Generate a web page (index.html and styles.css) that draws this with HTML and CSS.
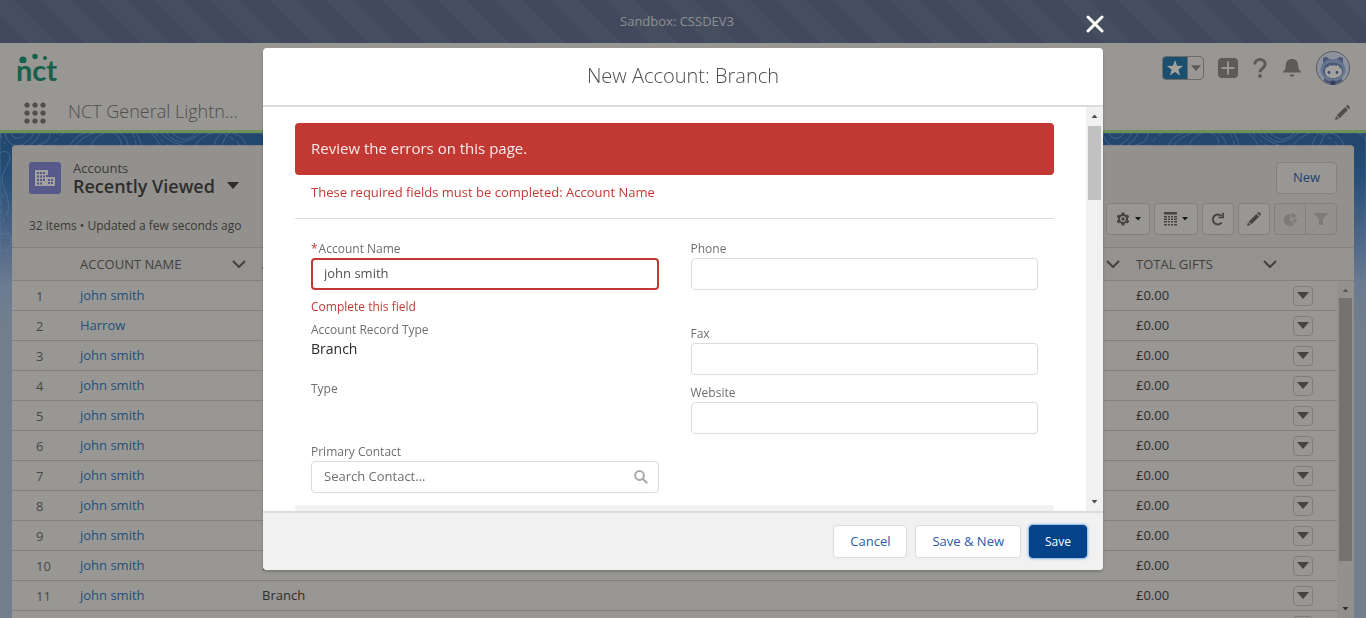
FILE: index.html
```
<!DOCTYPE html>
<html lang="en">
<head>
<meta charset="utf-8">
<meta name="viewport" content="width=device-width, initial-scale=1">
<title>New Account: Branch</title>
<link rel="stylesheet" href="styles.css">
</head>
<body>
<svg class="sprite" aria-hidden="true">
  <symbol id="caret" viewBox="0 0 12 8"><path d="M0 0h12L6 7z"/></symbol>
  <symbol id="chevron" viewBox="0 0 14 8"><path d="M1 1l6 6 6-6" fill="none" stroke="currentColor" stroke-width="2"/></symbol>
  <symbol id="pencil" viewBox="0 0 16 16"><path d="M11.6 1.3l1-1c.4-.4 1-.4 1.400 0l1.700 1.700c.4.4.4 1 0 1.400l-1 1zM10.700 2.200l3.100 3.100L5 14.100 1.900 11zM1.200 11.800l3 3-3.600 1c-.4.1-.6-.1-.5-.5z"/></symbol>
</svg>

<div class="page">
  <div class="banner">Sandbox: CSSDEV3</div>

  <header class="header">
    <div class="header-top">
      <div class="logo"><span class="logo-word">nct</span>
        <svg class="logo-dots" viewBox="0 0 40 10" width="40" height="10"><circle cx="7" cy="7" r="3.600"/><circle cx="19" cy="3.500" r="2.700"/><circle cx="29" cy="5" r="2"/></svg>
      </div>
      <div class="header-actions">
        <div class="favorites">
          <button class="fav-star" type="button" aria-label="Favorite"><svg width="18" height="18" viewBox="0 0 18 18"><path d="M9 1l2.100 5.700 6 .2-4.700 3.700 1.700 5.800L9 13l-5.100 3.400 1.700-5.800L.9 6.900l6-.2z"/></svg></button>
          <button class="fav-list" type="button" aria-label="Favorites list"><svg width="10" height="7"><use href="#caret"/></svg></button>
        </div>
        <button class="icon-btn" type="button" aria-label="Create"><svg width="20" height="20" viewBox="0 0 20 20"><rect width="20" height="20" rx="4"/><path class="cut" d="M10 3.500v13M3.500 10h13"/></svg></button>
        <button class="icon-btn narrow" type="button" aria-label="Help"><svg width="14" height="20" viewBox="0 0 14 20"><path class="line" d="M1.800 6.500C1.800 3.500 4 1.600 7 1.600s5.200 1.900 5.200 4.700c0 3.900-5.200 3.900-5.200 8"/><circle cx="7" cy="18" r="1.900"/></svg></button>
        <button class="icon-btn" type="button" aria-label="Notifications"><svg width="20" height="20" viewBox="0 0 20 20"><path d="M10 1c3.900 0 6.300 2.700 6.300 6.500 0 3.500.8 4.700 2.300 5.700.6.400.9 1.300.4 1.300H1c-.5 0-.2-.9.4-1.300 1.500-1 2.300-2.200 2.300-5.700C3.700 3.700 6.100 1 10 1zM7.500 16.500h5c-.2 1.400-1.200 2.200-2.500 2.200s-2.300-.8-2.500-2.200z"/></svg></button>
        <button class="avatar" type="button" aria-label="View profile"><svg width="34" height="34" viewBox="0 0 34 34">
          <circle cx="17" cy="17" r="16.500" fill="#8c929e" stroke="#5c5b5a"/>
          <path d="M7 7c3-2 5-1 6 1h8c1-2 3-3 6-1v7H7z" fill="#4b5877"/>
          <ellipse cx="17" cy="19" rx="12.500" ry="11" fill="#65748f"/>
          <path d="M8 27c5 4 13 4 18 0v3c-5 4-13 4-18 0z" fill="#4b5877"/>
          <circle cx="17" cy="32" r="2.500" fill="#333f5c"/>
          <ellipse cx="17" cy="19.500" rx="10" ry="8" fill="#4b5877"/>
          <path d="M9 20c0-3 1-4 3-4l2-2 2 1 2-1 2 1 2-1 1 2c2 1 3 2 3 4 0 5-4 7-9 7s-8-2-8-7z" fill="#a3a19e"/>
          <circle cx="13" cy="21.500" r="1.400" fill="#3c4867"/><circle cx="21" cy="21.500" r="1.400" fill="#3c4867"/>
        </svg></button>
      </div>
    </div>
    <div class="header-nav">
      <button class="launcher" type="button" aria-label="App Launcher"><svg width="22" height="22" viewBox="0 0 22 22"><g><circle cx="3" cy="3" r="2.600"/><circle cx="11" cy="3" r="2.600"/><circle cx="19" cy="3" r="2.600"/><circle cx="3" cy="11" r="2.600"/><circle cx="11" cy="11" r="2.600"/><circle cx="19" cy="11" r="2.600"/><circle cx="3" cy="19" r="2.600"/><circle cx="11" cy="19" r="2.600"/><circle cx="19" cy="19" r="2.600"/></g></svg></button>
      <span class="app-name">NCT General Lightn...</span>
      <button class="edit-nav" type="button" aria-label="Edit navigation"><svg width="15" height="15"><use href="#pencil"/></svg></button>
    </div>
  </header>

  <main class="stage">
    <svg class="contours" width="100%" height="180" aria-hidden="true">
      <defs><pattern id="topo" width="366" height="180" patternUnits="userSpaceOnUse">
        <path d="M5 0c2 12 12 16 20 10s8-8 8-10M11 0c2 6 10 8 15 0M0 20c6-4 12 0 9 8S0 42 3 52s8 18 4 30M40 0q-3 8-10 12M50 0q0 10-12 12M86 0q-10 2-16 12M94 0q-12 4-18 12M104 0q-9 4-13 12M113 0c5 2 8 6 8 12M120 0c5 3 7 7 8 12M136 0c3 4 4 8 5 12M151 0q6 6 9 12M161 0q7 8 20 12M166 0q10 10 17 9t18-9M172 0q9 8 15 6t9-6M195 12q6-8 17-12M214 12q2-7 7-12M222 12q2-7 7-12M233 0q10 3 13 12M260 0q8 3 9 12M300 0q-8 4-9 12M330 12q3-8 9-12M345 12q3-8 9-12M353 20c12 2 8 20 0 22M366 46c-12 5-14 18-9 28s8 20 2 34M354 90c8 16 8 26 0 36M0 102c10-6 14 4 9 12s-9 2-9-2M0 160l10-12M0 168l12-14"/>
        <path stroke-dasharray="5 3" d="M1 0q-1 8 7 12M64 0q-6 4-12 12M132 0q4 6 4 12M155 0q8 10 14 12M240 12q-8-8-18-12M3 60q-4 20 2 30M362 60q-10 20 0 40"/>
      </pattern></defs>
      <rect width="100%" height="180" fill="url(#topo)"/>
    </svg>
    <section class="card">
      <div class="card-head">
        <div class="title-row">
          <span class="entity"><svg width="20" height="16" viewBox="0 0 20 16"><path fill-rule="evenodd" d="M0 0h13v5h-2v11H0zM2 2v2h2V2zm3 0v2h2V2zm3 0v2h2V2zM2 5.500v2h2v-2zm3 0v2h2v-2zm3 0v2h2v-2zM2 9v2h2V9zm3 0v2h2V9zm3 0v2h2V9zM2 12.500v2h2v-2zm3 0v2h2v-2zM11 7h9v9h-9zm2 2v2h2V9zm3 0v2h2V9zm-3 3v2h2v-2zm3 0v2h2v-2z"/></svg></span>
          <div class="titles">
            <span class="kicker">Accounts</span>
            <h1 class="view-name">Recently Viewed <svg width="12" height="8"><use href="#caret"/></svg></h1>
          </div>
          <button class="btn-dim" type="button">New</button>
        </div>
        <div class="meta-row">
          <span class="meta">32 items • Updated a few seconds ago</span>
          <div class="tools">
            <button class="tool wide" type="button" aria-label="List view controls"><svg width="14" height="14" viewBox="0 0 14 14"><circle class="ring" cx="7" cy="7" r="4"/><circle cx="7" cy="7" r="1.700"/><path class="teeth" d="M7 .6v2.600M7 10.800v2.600M1.400 3.800l2.300 1.300M10.300 8.900l2.300 1.300M1.400 10.200l2.300-1.300M10.300 5.100l2.300-1.300"/></svg><svg class="dark" width="6" height="4"><use href="#caret"/></svg></button>
            <button class="tool wide" type="button" aria-label="Display as"><svg width="13" height="14" viewBox="0 0 13 14"><path d="M0 0h13v2.500H0zM0 4h3v1.500H0zm4 0h2v1.500H4zm3 0h2v1.500H7zm3 0h3v1.500h-3zM0 6.500h3V8H0zm4 0h2V8H4zm3 0h2V8H7zm3 0h3V8h-3zM0 9h3v1.500H0zm4 0h2v1.500H4zm3 0h2v1.500H7zm3 0h3v1.500h-3zM0 12h3v1.500H0zm4 0h2v1.500H4zm3 0h2v1.500H7zm3 0h3v1.500h-3z"/></svg><svg class="dark" width="6" height="4"><use href="#caret"/></svg></button>
            <button class="tool" type="button" aria-label="Refresh"><svg width="14" height="14" viewBox="0 0 14 14"><path class="line" d="M10.800 10.500A5 5 0 1 1 10.500 4"/><path d="M12.900.8v5.400H7.500V4.700h3.600V.8z"/></svg></button>
            <button class="tool" type="button" aria-label="Edit list"><svg width="14" height="14"><use href="#pencil"/></svg></button>
            <div class="tool-group">
              <button class="tool" type="button" disabled aria-label="Charts"><svg width="13" height="13" viewBox="0 0 13 13"><path d="M6 1v6l4 4.300A6 6 0 1 1 6 1zM7.500 0A5.500 5.500 0 0 1 12.400 4L7.500 5.500zM12.800 5.500a6 6 0 0 1-1.800 4.700L8 7.200z"/></svg></button>
              <button class="tool" type="button" disabled aria-label="Filters"><svg width="14" height="12" viewBox="0 0 14 12"><path d="M.5 0h13c.5 0 .5.500.3.800L9 6v6H5V6L.2.800C0 .5 0 0 .5 0z"/></svg></button>
            </div>
          </div>
        </div>
      </div>

      <div class="grid-wrap">
        <table class="accounts">
          <colgroup><col class="c-num"><col class="c-name"><col class="c-type"><col class="c-gifts"><col class="c-act"></colgroup>
          <thead><tr>
            <th></th>
            <th><span class="th">Account Name <svg width="14" height="8"><use href="#chevron"/></svg></span></th>
            <th><span class="th">Account Record Type <svg width="14" height="8"><use href="#chevron"/></svg></span></th>
            <th><span class="th">Total Gifts <svg width="14" height="8"><use href="#chevron"/></svg></span></th>
            <th></th>
          </tr></thead>
          <tbody>
            <tr><td>1</td><td><a href="#">john smith</a></td><td>Branch</td><td>£0.00</td><td><button class="row-btn" type="button" aria-label="Show actions"><svg width="12" height="8"><use href="#caret"/></svg></button></td></tr>
            <tr><td>2</td><td><a href="#">Harrow</a></td><td>Branch</td><td>£0.00</td><td><button class="row-btn" type="button" aria-label="Show actions"><svg width="12" height="8"><use href="#caret"/></svg></button></td></tr>
            <tr><td>3</td><td><a href="#">john smith</a></td><td>Branch</td><td>£0.00</td><td><button class="row-btn" type="button" aria-label="Show actions"><svg width="12" height="8"><use href="#caret"/></svg></button></td></tr>
            <tr><td>4</td><td><a href="#">john smith</a></td><td>Branch</td><td>£0.00</td><td><button class="row-btn" type="button" aria-label="Show actions"><svg width="12" height="8"><use href="#caret"/></svg></button></td></tr>
            <tr><td>5</td><td><a href="#">john smith</a></td><td>Branch</td><td>£0.00</td><td><button class="row-btn" type="button" aria-label="Show actions"><svg width="12" height="8"><use href="#caret"/></svg></button></td></tr>
            <tr><td>6</td><td><a href="#">john smith</a></td><td>Branch</td><td>£0.00</td><td><button class="row-btn" type="button" aria-label="Show actions"><svg width="12" height="8"><use href="#caret"/></svg></button></td></tr>
            <tr><td>7</td><td><a href="#">john smith</a></td><td>Branch</td><td>£0.00</td><td><button class="row-btn" type="button" aria-label="Show actions"><svg width="12" height="8"><use href="#caret"/></svg></button></td></tr>
            <tr><td>8</td><td><a href="#">john smith</a></td><td>Branch</td><td>£0.00</td><td><button class="row-btn" type="button" aria-label="Show actions"><svg width="12" height="8"><use href="#caret"/></svg></button></td></tr>
            <tr><td>9</td><td><a href="#">john smith</a></td><td>Branch</td><td>£0.00</td><td><button class="row-btn" type="button" aria-label="Show actions"><svg width="12" height="8"><use href="#caret"/></svg></button></td></tr>
            <tr><td>10</td><td><a href="#">john smith</a></td><td>Branch</td><td>£0.00</td><td><button class="row-btn" type="button" aria-label="Show actions"><svg width="12" height="8"><use href="#caret"/></svg></button></td></tr>
            <tr><td>11</td><td><a href="#">john smith</a></td><td>Branch</td><td>£0.00</td><td><button class="row-btn" type="button" aria-label="Show actions"><svg width="12" height="8"><use href="#caret"/></svg></button></td></tr>
            <tr><td></td><td></td><td></td><td></td><td><button class="row-btn" type="button" aria-label="Show actions"><svg width="12" height="8"><use href="#caret"/></svg></button></td></tr>
          </tbody>
        </table>
        <div class="gutter">
          <div class="gutter-cap"></div>
          <div class="scrollbar dim" aria-hidden="true"><svg width="7" height="4"><use href="#caret"/></svg><span class="thumb"></span><svg class="down" width="7" height="4"><use href="#caret"/></svg></div>
        </div>
      </div>
    </section>
  </main>
</div>

<div class="overlay">
  <div class="modal" role="dialog" aria-modal="true" aria-labelledby="modal-title">
    <button class="close" type="button" aria-label="Close"><svg width="18" height="18" viewBox="0 0 18 18"><path d="M2 2l14 14M16 2L2 16"/></svg></button>
    <div class="modal-head"><h2 id="modal-title">New Account: Branch</h2></div>
    <div class="modal-main">
      <div class="modal-body">
        <div class="alert" role="alert">Review the errors on this page.</div>
        <p class="alert-detail">These required fields must be completed: Account Name</p>
        <form class="fields" id="account-form">
          <div class="field edit"><label for="name"><span class="req">*</span>Account Name</label><input class="invalid" id="name" type="text" value="john smith" aria-describedby="name-err"><p class="error" id="name-err">Complete this field</p></div>
          <div class="field edit"><label for="phone">Phone</label><input id="phone" type="tel"></div>
          <div class="field"><span class="label">Account Record Type</span><span class="value">Branch</span></div>
          <div class="field edit"><label for="fax">Fax</label><input id="fax" type="tel"></div>
          <div class="field"><span class="label">Type</span></div>
          <div class="field edit"><label for="site">Website</label><input id="site" type="url"></div>
          <div class="field edit"><label for="contact">Primary Contact</label><div class="search"><input id="contact" type="text" placeholder="Search Contact..."><svg width="14" height="14" viewBox="0 0 14 14"><circle cx="5.500" cy="5.500" r="4.400"/><path d="M8.800 8.800l4.400 4.400"/></svg></div></div>
        </form>
        <div class="section-bar"></div>
      </div>
      <div class="scrollbar" aria-hidden="true"><svg width="7" height="4"><use href="#caret"/></svg><span class="thumb"></span><svg class="down" width="7" height="4"><use href="#caret"/></svg></div>
    </div>
    <div class="modal-foot">
      <button class="btn" type="button">Cancel</button>
      <button class="btn" type="button">Save &amp; New</button>
      <button class="btn primary" type="submit" form="account-form">Save</button>
    </div>
  </div>
</div>
</body>
</html>
```
FILE: styles.css
```
* { box-sizing: border-box; }
body {
  margin: 0;
  font-family: "Open Sans", "Noto Sans", sans-serif;
  font-size: 13px;
  line-height: 18px;
  color: #2e2d2c;
}
button, input { font: inherit; color: inherit; }
button { margin: 0; padding: 0; border: 0; background: none; display: flex; align-items: center; justify-content: center; }
svg { display: block; fill: currentColor; flex: none; }
h1, h2, p { margin: 0; }
a { color: #224f7c; text-decoration: none; }
.sprite { position: absolute; width: 0; height: 0; }

.page { height: 100vh; overflow: hidden; display: flex; flex-direction: column; }
.banner {
  flex: none;
  height: 43px;
  line-height: 42px;
  text-align: center;
  padding-right: 12px;
  color: #8f9092;
  background: repeating-linear-gradient(45deg, #42495d 0 20px, #444e5f 20px 40px);
}

.header { flex: none; height: 90px; background: #999794; border-bottom: 3px solid #6d8f58; color: #4f4e4c; }
.header-top { height: 50px; display: flex; align-items: center; justify-content: space-between; padding: 0 16px; }
.logo { position: relative; width: 42px; height: 30px; color: #17604b; }
.logo-word { font-family: Lato, sans-serif; font-weight: 700; font-size: 29px; line-height: 34px; }
.logo-dots { position: absolute; left: 0; top: 0; }
.header-actions { display: flex; align-items: center; gap: 13px; color: #5c5b5a; }
.favorites { display: flex; width: 42px; height: 24px; border: 1px solid #6a6967; border-radius: 4px; overflow: hidden; }
.fav-star { width: 24px; background: #1b4f6f; color: #a3a19e; }
.fav-list { width: 16px; border-left: 1px solid #6a6967; }
.icon-btn { width: 22px; height: 24px; }
.icon-btn.narrow { width: 16px; }
.icon-btn .cut { stroke: #999794; stroke-width: 2; }
.line { fill: none; stroke: currentColor; stroke-width: 2; }
.icon-btn .line { stroke-width: 3; }
.header-nav { height: 37px; display: flex; align-items: flex-start; padding: 9px 16px 0 24px; }
.launcher { width: 22px; height: 22px; }
.app-name { margin-left: 22px; font-size: 18px; font-weight: 300; line-height: 18px; }
.edit-nav { margin: 3px 0 0 auto; }

.stage {
  position: relative;
  flex: 1;
  min-height: 0;
  padding: 12px 12px 0;
  background: linear-gradient(#22466d 0, #244d77 40px, #4a6486 100px, #6a7a90 150px, #727e8c 190px);
}
.contours { position: absolute; left: 0; top: 0; fill: none; stroke: #5f7fa0; stroke-opacity: .5; }
.card { position: relative; border-radius: 4px 4px 0 0; background: #999794; border-top: 1px solid #858482; overflow: hidden; }
.card-head { height: 102px; padding: 13px 17px 0; background: #92918e; border-bottom: 1px solid #838180; }
.title-row { display: flex; align-items: flex-start; height: 44px; }
.entity { margin-top: 3px; width: 32px; height: 32px; border-radius: 3px; background: #57598b; color: #a3a19e; display: flex; align-items: center; justify-content: center; }
.titles { margin-left: 12px; display: flex; flex-direction: column; }
.kicker { line-height: 18px; color: #3a3938; }
.view-name { display: flex; align-items: center; gap: 12px; font-size: 18px; line-height: 18px; font-weight: 600; }
.btn-dim { margin: 3px 0 0 auto; padding-bottom: 2px; width: 61px; height: 32px; border: 1px solid #838180; border-radius: 4px; background: #999794; color: #22426e; }
.meta-row { display: flex; align-items: center; height: 32px; }
.meta { padding-top: 14px; font-size: 12px; color: #3a3938; }
.tools { margin-left: auto; display: flex; gap: 4px; color: #454442; }
.tool { width: 32px; height: 32px; border: 1px solid #838180; border-radius: 4px; background: #999794; }
.tool.wide { width: 44px; gap: 5px; }
.tool:disabled { color: #7d7b79; background: #92918e; }
.dark { color: #161616; }
.tool-group { display: flex; }
.tool-group .tool:first-child { border-radius: 4px 0 0 4px; }
.tool-group .tool:last-child { border-radius: 0 4px 4px 0; margin-left: -1px; }
.ring { fill: none; stroke: currentColor; stroke-width: 2; }
.teeth { stroke: currentColor; stroke-width: 3; }

.grid-wrap { display: flex; align-items: flex-start; }
.accounts { flex: 1; width: 100%; border-collapse: separate; border-spacing: 0; table-layout: fixed; }
.c-num { width: 60px; }
.c-name { width: 182px; }
.c-gifts { width: 157px; }
.c-act { width: 52px; }
.accounts th { height: 33px; padding: 0 8px; border-bottom: 1px solid #838180; text-align: left; font-weight: 400; text-transform: uppercase; color: #42413f; background: #959390; }
.th { display: flex; align-items: center; justify-content: space-between; white-space: nowrap; }
.accounts td { height: 30px; padding: 0 8px 2px; border-bottom: 1px solid #838180; }
.accounts td:first-child { padding: 0 0 0 24px; color: #484745; }
.accounts td:last-child { padding: 0 8px; }
.row-btn { margin-top: 1px; width: 20px; height: 20px; border: 1px solid #807e7c; border-radius: 4px; color: #454442; }
.gutter { width: 17px; display: flex; flex-direction: column; }
.gutter-cap { height: 33px; background: #959390; border-bottom: 1px solid #838180; }

.scrollbar { flex: none; width: 17px; display: flex; flex-direction: column; align-items: center; padding: 7px 0; background: #f1f1f1; color: #505050; }
.scrollbar svg { transform: rotate(180deg); }
.scrollbar svg.down { transform: none; margin-top: auto; }
.scrollbar .thumb { width: 13px; height: 74px; margin-top: 8px; background: #c1c1c1; }
.scrollbar.dim { height: 337px; background: #92918e; color: #2e2d2c; }
.scrollbar.dim .thumb { height: 263px; margin-top: 6px; background: #757371; }
.scrollbar.dim svg:first-child { color: #5c5b5a; }

.overlay { position: fixed; inset: 0; padding: 48px 16px; display: flex; justify-content: center; }
.modal { position: relative; width: 100%; max-width: 840px; display: flex; flex-direction: column; border-radius: 4px; background: #fff; box-shadow: 0 2px 3px rgba(0, 0, 0, .2); color: #2b2826; }
.close { position: absolute; top: -33px; right: -1px; }
.close path { stroke: #fff; stroke-width: 3; stroke-linecap: round; }
.modal-head { flex: none; height: 59px; border-bottom: 2px solid #dddbda; text-align: center; }
.modal-head h2 { font-size: 20px; font-weight: 300; line-height: 56px; color: #504e4c; }
.modal-main { flex: 1; min-height: 0; display: flex; }
.modal-body { flex: 1; min-width: 0; overflow: hidden; padding: 16px 32px 0; }
.alert { padding: 15px 16px 17px; font-size: 15px; line-height: 20px; background: #c23934; color: #f9e8e7; border-radius: 4px; }
.alert-detail { height: 44px; padding: 8px 16px 0; color: #c23934; border-bottom: 1px solid #dddbda; }
.fields { display: grid; grid-template-columns: 1fr 1fr; column-gap: 32px; padding: 17px 16px 0; }
.field { display: flex; flex-direction: column; color: #706e6b; font-size: 12px; }
.field.edit { padding: 4px 0 5px; }
.field input { width: 100%; height: 32px; padding: 0 12px 2px; border: 1px solid #dddbda; border-radius: 4px; background: #fff; font-size: 13px; color: #54524f; outline: 0; }
.field input.invalid { border: 2px solid #c23934; padding: 0 11px 2px; }
.field input::placeholder { color: #706e6b; opacity: 1; }
.req { color: #c23934; margin-right: 1px; }
.error { margin-top: 8px; color: #c23934; }
.value { font-size: 14px; line-height: 20px; color: #2b2826; }
.search { position: relative; }
.search svg { position: absolute; right: 11px; top: 9px; fill: none; stroke: #aaa8a6; stroke-width: 2; }
.section-bar { margin-top: 7px; height: 32px; border-radius: 4px; background: #f3f2f2; }
.modal-foot { flex: none; height: 59px; padding: 0 16px; display: flex; align-items: center; justify-content: flex-end; gap: 8px; border-top: 2px solid #dddbda; border-radius: 0 0 4px 4px; background: #f1f1f1; }
.btn { height: 33px; padding: 0 16px 2px; border: 1px solid #dddbda; border-radius: 4px; background: #fff; color: #2a5ba8; }
.btn.primary { padding: 0 15px; font-size: 12px; background: #04428a; border-color: #04428a; color: #fff; box-shadow: 0 0 3px #0070d2; }
```
